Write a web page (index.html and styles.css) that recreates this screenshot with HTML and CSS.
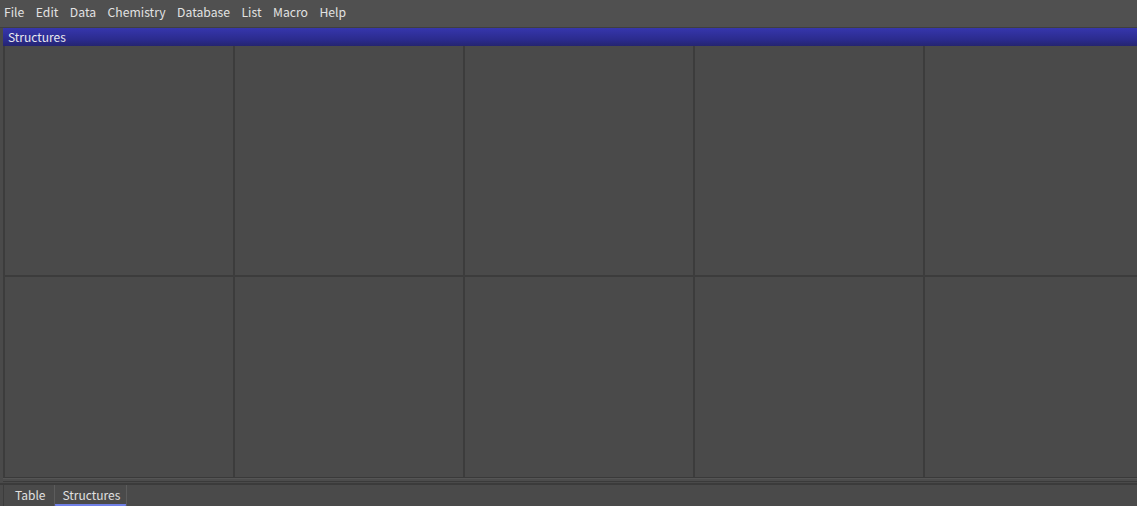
FILE: index.html
```html
<!DOCTYPE html>
<html>
<head>
<meta charset="utf-8">
<link rel="stylesheet" href="styles.css">
</head>
<body>
<div class="app">
  <nav class="menubar">
    <span class="menu">File</span>
    <span class="menu">Edit</span>
    <span class="menu">Data</span>
    <span class="menu">Chemistry</span>
    <span class="menu">Database</span>
    <span class="menu">List</span>
    <span class="menu">Macro</span>
    <span class="menu">Help</span>
  </nav>
  <div class="panel">
    <div class="titlebar">Structures</div>
    <div class="grid">
      <div class="cell"></div><div class="cell"></div><div class="cell"></div><div class="cell"></div><div class="cell"></div>
      <div class="cell row2"></div><div class="cell row2"></div><div class="cell row2"></div><div class="cell row2"></div><div class="cell row2"></div>
    </div>
    <div class="hscroll"></div>
  </div>
  <div class="tabs">
    <span class="tab">Table</span>
    <span class="tab active">Structures</span>
  </div>
</div>
</body>
</html>
```

FILE: styles.css
```css
html, body {
  margin: 0;
  padding: 0;
  background: #4a4a4a;
  overflow: hidden;
}
.app {
  width: 1137px;
  height: 506px;
  display: flex;
  flex-direction: column;
  font-family: "Noto Sans CJK SC", "Noto Sans", sans-serif;
  font-size: 12px;
  color: #e2e2e2;
}
.menubar {
  height: 28px;
  background: #505050;
  border-bottom: 1px solid #3f3f3f;
  display: flex;
  align-items: center;
  gap: 11.5px;
  padding-left: 4px;
  padding-bottom: 4px;
  box-sizing: border-box;
  font-size: 12.2px;
}
.menu {
  line-height: 16px;
}
.panel {
  margin-left: 3px;
  display: flex;
  flex-direction: column;
}
.titlebar {
  height: 18px;
  line-height: 17px;
  padding-left: 5px;
  background: linear-gradient(#3636ad, #2a2a8a 70%, #252570);
  color: #e8e8ee;
  box-sizing: border-box;
}
.grid {
  display: grid;
  grid-template-columns: repeat(5, 230px);
  grid-template-rows: 231px 200px;
  border-left: 2px solid #3c3c3c;
  border-bottom: 1px solid #3a3a3a;
  overflow: hidden;
  height: 432px;
  box-sizing: border-box;
  background: #4a4a4a;
}
.cell {
  border-right: 2px solid #3c3c3c;
  border-bottom: 2px solid #3c3c3c;
  background: #4a4a4a;
}
.cell.row2 {
  border-bottom: none;
}
.hscroll {
  height: 2px;
  border-top: 1px solid #555;
  border-bottom: 1px solid #3a3a3a;
  background: #4c4c4c;
}
.tabs {
  display: flex;
  padding-left: 3px;
  height: 21px;
  border-top: 2px solid #3b3b3b;
  margin-top: 1px;
}
.tab {
  padding: 0 9px 0 11px;
  line-height: 19px;
  color: #e0e0e0;
  border-left: 1px solid #3c3c3c;
}
.tab.active {
  border: 1px solid #5c5c5c;
  border-top: none;
  border-bottom: 2px solid #6f7fe6;
  padding: 0 6px 0 7px;
  border-radius: 0 0 2px 2px;
}
```
